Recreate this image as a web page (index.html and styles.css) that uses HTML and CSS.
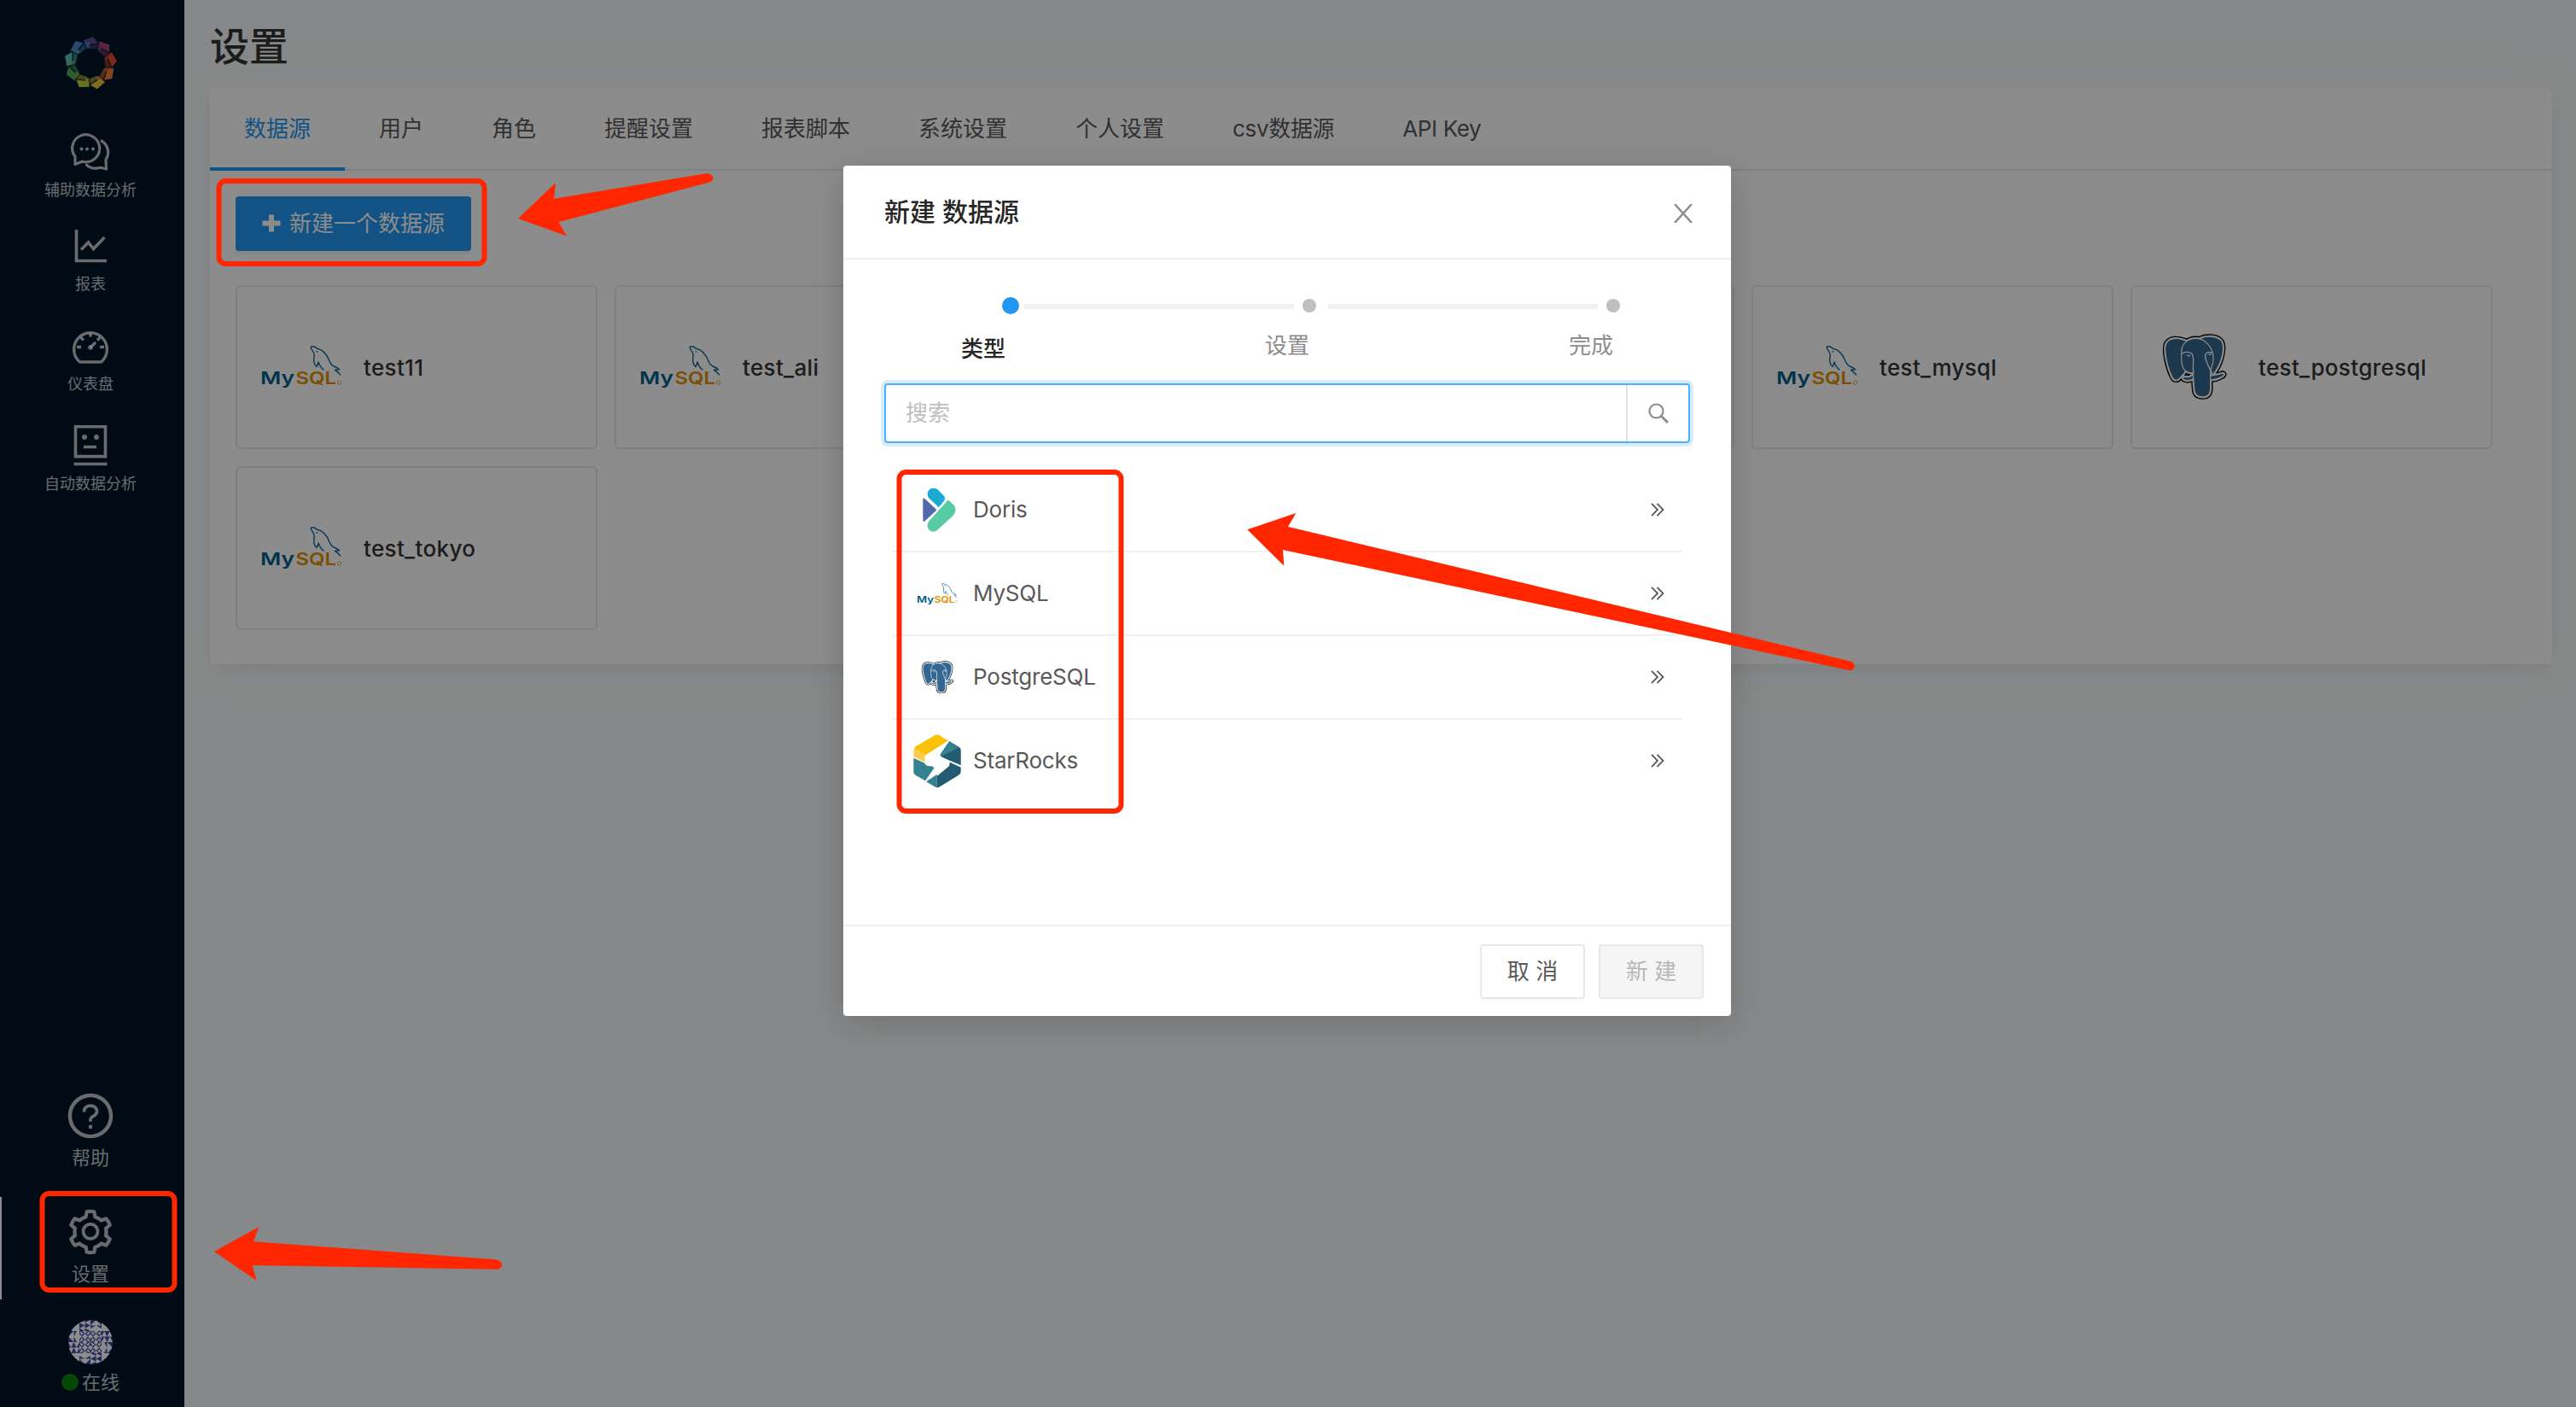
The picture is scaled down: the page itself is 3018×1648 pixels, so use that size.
FILE: index.html
```html
<!DOCTYPE html>
<html lang="zh-CN">
<head>
<meta charset="utf-8">
<title>设置</title>
<link rel="stylesheet" href="styles.css">
</head>
<body>
<svg class="sprite" aria-hidden="true">
  <symbol id="mysql" viewBox="0 0 96 50">
    <path d="M59 1.500C61 .5 64 .8 66 3c8 1.500 12 7 15 15 1.500 4 3 5 5 6 3 1 5 2 6.500 3.800-2 .2-4 .6-5 .5 3 2 5 4 6.500 6M59 1.500c0 2 3 5 4 8 .5 3-.8 6 0 10 .5 2 1.500 4 3 5 .8-1 1.500-3 2-5.500 1 3 3 7 6.500 9.500" fill="none" stroke="#12678f" stroke-width="1.400" stroke-linejoin="round"/>
    <circle cx="66.500" cy="6.800" r=".9" fill="#12678f"/>
    <text x="0" y="45" font-size="20.500" font-weight="600" fill="#00618a" textLength="40" lengthAdjust="spacingAndGlyphs">My</text>
    <text x="41.500" y="45" font-size="20.500" font-weight="600" fill="#e48e00" textLength="47.500" lengthAdjust="spacingAndGlyphs">SQL</text>
    <circle cx="92.500" cy="43" r="2.200" fill="none" stroke="#e48e00" stroke-width=".8"/>
  </symbol>
  <symbol id="pg-shape" viewBox="0 0 330 300" overflow="visible">
    <path d="M122 60C100 52 72 50 60 70c-12 24 6 90 20 117 6 13 18 14 26 4l16-18 50-90z"/>
    <path d="M176 54c24-10 62-10 76 12 12 28-6 82-30 112l-20-4z"/>
    <path d="M118 184c8 6 22 4 34-4l2 12c-8 8-28 10-36 2z"/>
    <path d="M212 182c10 2 28-4 44-8 6 2 4 10-8 14-10 6-26 10-38 8z"/>
    <path d="M112 106c-2-32 20-52 50-52 34 0 60 34 60 68 0 24-10 30-10 56v48c0 20-8 30-26 30-20 0-30-10-30-30l-4-52c-34-2-42-20-40-68z"/>
  </symbol>
  <symbol id="postgres" viewBox="43 38 225 230">
    <use href="#pg-shape" width="330" height="300" fill="#000" stroke="#000" stroke-width="17" stroke-linejoin="round"/>
    <use href="#pg-shape" width="330" height="300" fill="#fff" stroke="#fff" stroke-width="9" stroke-linejoin="round"/>
    <use href="#pg-shape" width="330" height="300" fill="#336791" stroke="#fff" stroke-width="3.500" stroke-linejoin="round"/>
    <path d="M114 106c10-8 30-6 36 4 8 22-2 40 4 64M218 104c-10-4-22-2-24 8 0 22 12 40 24 62M132 112l8 2M208 110l6-1" fill="none" stroke="#fff" stroke-width="4" stroke-linecap="round"/>
  </symbol>
  <symbol id="right" viewBox="0 0 16 16">
    <path d="M1 .8 8 8l-7 7.200M7.500.8l7 7.200-7 7.200" fill="none" stroke="currentColor" stroke-width="1.800"/>
  </symbol>
  <symbol id="tile" viewBox="0 0 13 13">
    <path fill="#fff" d="M6.500 3 10 6.500 6.500 10 3 6.500zM0 0l5 2.500L2.500 5zM13 0l-2.500 5L8 2.500zM0 13l2.500-5L5 10.500zM13 13 8 10.500 10.500 8zM3.500 0h6l-3 3zM3.500 13h6l-3-3zM0 3.500v6l3-3zM13 3.500v6l-3-3z"/>
  </symbol>
  <symbol id="tri" viewBox="0 0 13 6.500"><path fill="#fff" d="M0 0v6.500L6.500 3.200zM6.500 0v6.500L13 3.200z"/></symbol>
</svg>

<div class="app">
  <nav class="sidebar">
    <svg class="logo" viewBox="-32 -32 64 64">
      <defs><g id="petal"><path d="M3-31-8.500-26.500-4.500-21 9-23.800z"/><path d="m-4.200-20 13-2.700-1.500 6-9 .2z" opacity=".6"/><path d="M9.800-23.200 15.500-20l-4.800 5.800-2.800-1.800z" opacity=".8"/></g></defs>
      <use href="#petal" fill="#5e4c88"/>
      <use href="#petal" fill="#a0406f" transform="rotate(40)"/>
      <use href="#petal" fill="#e2492f" transform="rotate(80)"/>
      <use href="#petal" fill="#ee7f36" transform="rotate(120)"/>
      <use href="#petal" fill="#e8c83c" transform="rotate(160)"/>
      <use href="#petal" fill="#bcd03c" transform="rotate(200)"/>
      <use href="#petal" fill="#4fa956" transform="rotate(240)"/>
      <use href="#petal" fill="#5fbfb0" transform="rotate(280)"/>
      <use href="#petal" fill="#4a86c4" transform="rotate(320)"/>
    </svg>
    <div class="nav-item first">
      <svg class="nav-icon" viewBox="0 0 48 48" fill="none" stroke="currentColor" stroke-width="3.200"><path d="M6 38.500V29.500A16 16 0 1 1 16 35.500L14 35.200z" stroke-linejoin="round"/><path d="M36 10.500A15.500 15.500 0 0 1 42 33l.5 11-6.500-1.700c-7 2-13 .5-17.500-4" stroke-linejoin="round"/><g fill="currentColor" stroke="none"><circle cx="13.500" cy="20.500" r="2"/><circle cx="20" cy="20.500" r="2"/><circle cx="27" cy="20.500" r="2"/></g></svg>
      <span>辅助数据分析</span>
    </div>
    <div class="nav-item">
      <svg class="nav-icon" viewBox="0 0 48 48" fill="none" stroke="currentColor" stroke-width="3.600"><path d="M7.500 5v36.500H43M13 28.500 21.500 20l6 7.500L40.500 14"/></svg>
      <span>报表</span>
    </div>
    <div class="nav-item">
      <svg class="nav-icon" viewBox="0 0 48 48" fill="none" stroke="currentColor" stroke-width="3.400"><path d="M11.500 43a19.400 19.400 0 1 1 25 0z" stroke-linejoin="round"/><path d="M24 8.500v5M8 25.500h5M35 25.500h5M12.500 14l3.500 3.500M35.500 14 32 17.500M24 26l6-6" /><circle cx="24" cy="26" r="2.800" fill="currentColor" stroke="none"/></svg>
      <span>仪表盘</span>
    </div>
    <div class="nav-item">
      <svg class="nav-icon" viewBox="0 0 48 48" fill="none" stroke="currentColor" stroke-width="3.200"><path d="M6.500 1.600h35v35h-35zM4.500 45.500h39M16 25.500h15" stroke-width="3.600"/><circle cx="17" cy="14" r="3" fill="currentColor" stroke="none"/><circle cx="31" cy="14" r="3" fill="currentColor" stroke="none"/></svg>
      <span>自动数据分析</span>
    </div>
    <div class="nav-foot help">
      <svg class="foot-icon" viewBox="0 0 1024 1024" fill="currentColor"><path d="M512 64C264.600 64 64 264.600 64 512s200.600 448 448 448 448-200.600 448-448S759.400 64 512 64zm0 820c-205.400 0-372-166.600-372-372s166.600-372 372-372 372 166.600 372 372-166.600 372-372 372z"/><path d="M623.600 316.700C593.600 290.400 554 276 512 276s-81.600 14.500-111.600 40.700C369.200 344 352 380.700 352 420v7.600c0 4.400 3.600 8 8 8h48c4.400 0 8-3.600 8-8V420c0-44.100 43.100-80 96-80s96 35.900 96 80c0 31.100-22 59.600-56.100 72.700-21.200 8.100-39.200 22.300-52.100 40.900-13.100 19-19.900 41.800-19.900 64.900V620c0 4.400 3.600 8 8 8h48c4.400 0 8-3.600 8-8v-22.700a48.300 48.300 0 0 1 30.900-44.800c59-22.700 97.100-74.700 97.100-132.500.1-39.300-17.100-76-48.300-103.300zM472 732a40 40 0 1 0 80 0 40 40 0 1 0-80 0z"/></svg>
      <span>帮助</span>
    </div>
    <div class="nav-foot active">
      <svg class="foot-icon" viewBox="0 0 1024 1024" fill="currentColor"><path d="M924.800 625.700l-65.500-56c3.100-19 4.700-38.400 4.700-57.800s-1.600-38.800-4.700-57.800l65.500-56a32.030 32.030 0 0 0 9.300-35.200l-.9-2.600a443.740 443.740 0 0 0-79.700-137.900l-1.800-2.100a32.120 32.120 0 0 0-35.100-9.500l-81.300 28.900c-30-24.600-63.500-44-99.700-57.600l-15.700-85a32.050 32.050 0 0 0-25.800-25.700l-2.700-.5c-52.100-9.400-106.900-9.400-159 0l-2.700.5a32.050 32.050 0 0 0-25.800 25.700l-15.800 85.400a351.860 351.860 0 0 0-99 57.400l-81.900-29.100a32 32 0 0 0-35.100 9.500l-1.800 2.100a446.020 446.020 0 0 0-79.700 137.900l-.9 2.600c-4.500 12.500-.8 26.500 9.300 35.200l66.300 56.600c-3.100 18.800-4.600 38-4.600 57.100 0 19.200 1.500 38.400 4.600 57.100L99 625.500a32.030 32.030 0 0 0-9.300 35.200l.9 2.600c18.100 50.400 44.900 96.900 79.700 137.900l1.800 2.100a32.120 32.120 0 0 0 35.100 9.500l81.900-29.100c29.800 24.500 63.100 43.900 99 57.400l15.800 85.400a32.050 32.050 0 0 0 25.800 25.700l2.700.5a449.400 449.400 0 0 0 159 0l2.700-.5a32.050 32.050 0 0 0 25.800-25.700l15.700-85a350 350 0 0 0 99.700-57.600l81.300 28.900a32 32 0 0 0 35.100-9.500l1.800-2.100c34.800-41.100 61.600-87.500 79.700-137.900l.9-2.600c4.500-12.300.8-26.300-9.300-35zM788.300 465.900c2.500 15.100 3.800 30.600 3.800 46.100s-1.300 31-3.800 46.100l-6.600 40.100 74.700 63.900a370.030 370.030 0 0 1-42.600 73.600L721 702.800l-31.400 25.800c-23.900 19.600-50.500 35-79.300 45.800l-38.100 14.300-17.900 97a377.500 377.500 0 0 1-85 0l-17.900-97.200-37.800-14.500c-28.500-10.800-55-26.200-78.700-45.700l-31.400-25.900-93.400 33.200c-17-22.900-31.200-47.600-42.600-73.600l75.500-64.500-6.500-40c-2.400-14.900-3.700-30.300-3.700-45.500 0-15.300 1.200-30.600 3.700-45.500l6.500-40-75.500-64.500c11.300-26.100 25.600-50.700 42.600-73.600l93.400 33.200 31.400-25.900c23.700-19.500 50.200-34.900 78.700-45.700l37.900-14.300 17.900-97.200c28.100-3.200 56.800-3.200 85 0l17.900 97 38.100 14.300c28.700 10.800 55.400 26.200 79.300 45.800l31.400 25.800 92.800-32.900c17 22.900 31.200 47.600 42.600 73.600L781.800 426l6.500 39.900zM512 326c-97.200 0-176 78.800-176 176s78.800 176 176 176 176-78.800 176-176-78.800-176-176-176zm79.200 255.200A111.600 111.600 0 0 1 512 614c-29.900 0-58-11.700-79.200-32.800A111.600 111.600 0 0 1 400 502c0-29.900 11.700-58 32.800-79.200C454 401.600 482.100 390 512 390c29.900 0 58 11.600 79.200 32.800A111.600 111.600 0 0 1 624 502c0 29.900-11.700 58-32.800 79.200z"/></svg>
      <span>设置</span>
    </div>
    <div class="nav-user">
      <svg class="avatar" viewBox="0 0 52 52">
        <rect width="52" height="52" fill="#404ca8"/>
        <use href="#tile" x="13" y="13" width="13" height="13"/><use href="#tile" x="26" y="13" width="13" height="13"/><use href="#tile" x="13" y="26" width="13" height="13"/><use href="#tile" x="26" y="26" width="13" height="13"/>
        <g id="edge"><path fill="#fff" d="M19.500 0v6.500L13 3.250zM26 0v6.500l-6.500-3.250zM19.500 6.500V13L13 9.750zM26 6.500V13l-6.500-3.250zM26 6.500 32.500 0 39 6.500zM26 13v-3l6.500-3.500L39 10v3zM2 13 13 2v11z"/></g>
        <use href="#edge" transform="rotate(90 26 26)"/><use href="#edge" transform="rotate(180 26 26)"/><use href="#edge" transform="rotate(270 26 26)"/>
      </svg>
      <div class="status"><i></i><span>在线</span></div>
    </div>
  </nav>

  <main class="main">
    <h1>设置</h1>
    <section class="panel">
      <div class="tabs">
        <a class="on">数据源</a><a>用户</a><a>角色</a><a>提醒设置</a><a>报表脚本</a><a>系统设置</a><a>个人设置</a><a class="latin">csv数据源</a><a class="latin">API Key</a>
      </div>
      <div class="panel-body">
        <button class="add"><svg viewBox="0 0 22 22"><path d="M8 .5h6v7h7.500v6H14v7H8v-7H.5v-6H8z" fill="#fff"/></svg><span>新建一个数据源</span></button>
        <div class="cards">
          <div class="card"><svg class="mysql"><use href="#mysql"/></svg><b>test11</b></div>
          <div class="card"><svg class="mysql"><use href="#mysql"/></svg><b>test_ali</b></div>
          <div class="card"></div>
          <div class="card"></div>
          <div class="card"><svg class="mysql"><use href="#mysql"/></svg><b>test_mysql</b></div>
          <div class="card"><svg class="pg"><use href="#postgres"/></svg><b>test_postgresql</b></div>
          <div class="card"><svg class="mysql"><use href="#mysql"/></svg><b>test_tokyo</b></div>
        </div>
      </div>
    </section>
  </main>
</div>

<div class="mask">
  <div class="modal" role="dialog">
    <header class="modal-head">
      <h2>新建 数据源</h2>
      <svg class="close" viewBox="0 0 22 22"><path d="M1 0 21 22M21 0 1 22" fill="none" stroke="#8c8c8c" stroke-width="2.400"/></svg>
    </header>
    <div class="modal-body">
      <div class="steps">
        <div class="step current"><div class="track"><i></i><u></u></div><span>类型</span></div>
        <div class="step"><div class="track"><i></i><u></u></div><span>设置</span></div>
        <div class="step"><div class="track"><i></i></div><span>完成</span></div>
      </div>
      <div class="search">
        <span>搜索</span>
        <div class="search-btn"><svg viewBox="0 0 24 24"><circle cx="9.500" cy="9.500" r="8" fill="none" stroke="#8c8c8c" stroke-width="2.200"/><path d="m15.500 15.500 7.500 7.500" stroke="#8c8c8c" stroke-width="3"/></svg></div>
      </div>
      <div class="list">
        <div class="row"><div class="ico"><svg class="doris" viewBox="152 122 118 157"><path fill="#5268ac" d="M153 163q1-6 6-2l40 37q2 3 0 6l-40 37q-5 4-6-3z"/><path fill="#19abd1" d="M169 146c0-21 24-29 38-15l18 18c8 8 7 15 2 21l-18 22-33-31q-7-7-7-15z"/><path fill="#57cba4" d="m242 166 19 16c10 11 10 26 0 38l-54 50c-19 18-39 2-38-15 0-6 3-12 7-16z"/></svg></div><span>Doris</span><svg class="go"><use href="#right"/></svg></div>
        <div class="row"><div class="ico"><svg class="mysql-s"><use href="#mysql"/></svg></div><span>MySQL</span><svg class="go"><use href="#right"/></svg></div>
        <div class="row"><div class="ico"><svg class="pg-s"><use href="#postgres"/></svg></div><span>PostgreSQL</span><svg class="go"><use href="#right"/></svg></div>
        <div class="row"><div class="ico"><svg class="rocks" viewBox="121 989 167 187"><path fill="#fbc108" d="M196 992q8-4 16 0l31 19-81 51-38-23q1-6 7-9z"/><path fill="#fdcd50" d="m124 1039 38 23-1 24-39-19v-19q0-6 2-9z"/><path fill="#35828f" d="m122 1071 38 18q6 11 17 11 12-2 17 6l-31 45-34-19q-7-5-7-13z"/><path fill="#235b70" d="m247 1013 34 20q6 4 6 11v53l-43-18-27-13q-3-4 0-9z"/><path fill="#35828f" d="m247 1013 34 22-64 32q-3-4 0-10z"/><path fill="#235b70" d="m248 1086 39 18v15q0 9-8 13l-67 41q-4 3-8 2v-40l40-33q5-5 4-16z"/><path fill="#35828f" d="m166 1154 38-25v46q-4 0-8-3z"/></svg></div><span>StarRocks</span><svg class="go"><use href="#right"/></svg></div>
      </div>
    </div>
    <footer class="modal-foot">
      <button class="btn">取 消</button>
      <button class="btn disabled">新 建</button>
    </footer>
  </div>
</div>

<svg class="marks" viewBox="0 0 3018 1648">
  <g fill="none" stroke="#ff2600" stroke-width="6">
    <rect x="256.500" y="212" width="311" height="97" rx="8"/>
    <rect x="49.500" y="1398" width="155" height="113" rx="8"/>
    <rect x="1053.500" y="553" width="260" height="397" rx="8"/>
  </g>
  <g fill="#ff2600">
    <path d="M607 256 651 214 649 232.700 827 203.200Q835 203 835.500 209 835 212 832 213.300L654.500 260 664 276.500z"/>
    <path d="M251 1466 303.300 1437 297 1454.300 581 1475.300Q588 1477 588 1481 588 1486 583 1486.700L295.800 1482 300.500 1500z"/>
    <path d="M1461.300 620.300 1518.300 601 1509 617 2168 774.600Q2173 776.500 2172.700 780.500 2172 785.500 2167 785.300L1503 644 1504.300 662.700z"/>
  </g>
</svg>
</body>
</html>
```
FILE: styles.css
```css
* { box-sizing: border-box; }
body {
  margin: 0;
  width: 3018px;
  height: 1648px;
  overflow: hidden;
  position: relative;
  font-family: Inter, "Noto Sans CJK SC", sans-serif;
  font-size: 26px;
  line-height: 40px;
  color: #595959;
  background: #f6f8f9;
}
h1, h2, b { font-weight: 500; margin: 0; }
svg { display: block; flex: none; }
button { font: inherit; margin: 0; padding: 0; }
.sprite { display: none; }

.app { display: flex; height: 1648px; }

/* Sidebar */
.sidebar {
  width: 216px;
  flex: none;
  background: #001529;
  color: rgba(255, 255, 255, .75);
  display: flex;
  flex-direction: column;
}
.sidebar > div { padding-right: 4px; }
.logo { width: 66px; height: 64px; margin: 42px 0 48px 73px; }
.nav-item {
  display: flex;
  flex-direction: column;
  align-items: center;
  gap: 10px;
  margin-bottom: 37px;
  font-size: 18px;
  line-height: 22px;
}
.nav-item.first { margin-bottom: 30px; }
.nav-icon { width: 48px; height: 48px; }
.nav-foot {
  height: 120px;
  padding-top: 11px;
  display: flex;
  flex-direction: column;
  align-items: center;
  gap: 5px;
  font-size: 22px;
  line-height: 28px;
}
.nav-foot.help { margin: auto 0 16px; }
.nav-foot.active { box-shadow: inset 2px 0 #fff; }
.foot-icon { width: 60px; height: 60px; }
.nav-user {
  height: 126px;
  padding-top: 24px;
  display: flex;
  flex-direction: column;
  align-items: center;
  gap: 7px;
  font-size: 22px;
  line-height: 28px;
}
.avatar { width: 52px; height: 52px; border-radius: 50%; }
.status { display: flex; align-items: center; gap: 4px; }
.status i { width: 20px; height: 20px; border-radius: 50%; background: #0c800c; }

/* Page */
.main { flex: 1; padding: 24px 28px 0 30px; }
h1 { font-size: 46px; line-height: 60px; color: #333; }
.panel {
  margin-top: 20px;
  height: 674px;
  background: #fff;
  border-radius: 6px;
  box-shadow: 0 8px 18px -6px rgba(102, 136, 153, .15), 0 0 60px rgba(102, 136, 153, .06);
}
.tabs { display: flex; height: 96px; border-bottom: 2px solid #e8e8e8; }
.tabs a { padding: 27px 40px 0; height: 96px; }
.tabs a.latin { letter-spacing: -.35px; }
.tabs a.on { color: #2196f3; border-bottom: 4px solid #2196f3; }
.panel-body { padding: 30px; }
.add {
  width: 276px;
  height: 64px;
  display: flex;
  align-items: center;
  justify-content: center;
  gap: 10px;
  border: 0;
  border-radius: 4px;
  color: #fff;
  background: #2196f3;
  box-shadow: 0 4px 0 rgba(0, 0, 0, .045);
}
.add svg { width: 22px; height: 22px; }
.cards { margin-top: 40px; display: grid; grid-template-columns: repeat(6, 424px); gap: 20px; }
.card {
  height: 192px;
  border: 2px solid #e8e8e8;
  border-radius: 6px;
  padding-left: 27px;
  display: flex;
  align-items: center;
  color: #333;
}
.card b { padding-top: 2px; letter-spacing: .35px; }
.mysql { width: 96px; height: 50px; margin-right: 25px; }
.pg { width: 77px; height: 78px; margin: 0 37px 0 7px; }

/* Modal */
.mask {
  position: absolute;
  inset: 0;
  display: flex;
  justify-content: center;
  align-items: flex-start;
  padding: 194px 2px 0 0;
  background: rgba(0, 0, 0, .45);
}
.modal {
  width: 1040px;
  height: 996px;
  display: flex;
  flex-direction: column;
  background: #fff;
  border-radius: 4px;
  box-shadow: 0 8px 40px rgba(0, 0, 0, .17);
}
.modal-head {
  height: 110px;
  padding: 0 45px 0 48px;
  display: flex;
  align-items: center;
  justify-content: space-between;
  border-bottom: 2px solid #f0f0f0;
}
.modal-head h2 { font-size: 30px; color: #262626; }
.close { width: 22px; height: 22px; margin-top: 4px; }
.modal-body { flex: 1; padding: 44px 48px 0; }
.steps { height: 101px; display: flex; padding-left: 48px; }
.step { width: 356px; flex: none; color: #8c8c8c; }
.step:last-child { width: 136px; }
.step span { display: block; width: 136px; text-align: center; margin-top: 17px; }
.step.current span { margin-top: 21px; color: #262626; font-weight: 500; }
.track { height: 20px; display: flex; align-items: center; padding-left: 86px; }
.track i { flex: none; width: 16px; height: 16px; border-radius: 50%; background: #bfbfbf; }
.track u { flex: none; width: 316px; height: 6px; margin: 2px 0 0 14px; border-radius: 2px; background: #f0f0f0; }
.current .track { padding-left: 90px; }
.current .track i { width: 20px; height: 20px; background: #2196f3; }
.current .track u { margin-left: 6px; }
.search {
  height: 70px;
  display: flex;
  justify-content: space-between;
  align-items: center;
  padding-left: 23px;
  border: 2px solid #4ab0ff;
  border-radius: 4px;
  box-shadow: 0 0 0 4px rgba(33, 150, 243, .18);
  color: #bfbfbf;
}
.search-btn {
  width: 73px;
  height: 66px;
  border-left: 2px solid #e2e2e2;
  display: flex;
  align-items: center;
  justify-content: center;
}
.search svg { width: 24px; height: 24px; }
.list { margin: 30px 10px 0; }
.row {
  height: 98px;
  display: flex;
  align-items: center;
  padding: 0 20px 0 24px;
  border-bottom: 2px solid #f0f0f0;
}
.row:last-child { border-color: transparent; }
.row span { flex: 1; margin-left: 14px; letter-spacing: -.2px; }
.ico { width: 56px; display: flex; justify-content: center; }
.doris { width: 39px; height: 52px; margin-left: 4px; }
.mysql-s { width: 48px; height: 25px; }
.pg-s { width: 38px; height: 39px; margin-right: 1px; }
.rocks { width: 56px; height: 63px; }
.go { width: 16px; height: 16px; }
.modal-foot {
  height: 107px;
  padding: 21px 32px 0;
  border-top: 2px solid #f0f0f0;
  display: flex;
  justify-content: flex-end;
  gap: 16px;
}
.btn {
  width: 123px;
  height: 64px;
  border: 2px solid #e8e8e8;
  border-radius: 4px;
  background: #fff;
  color: #595959;
  box-shadow: 0 4px 0 rgba(0, 0, 0, .015);
}
.btn.disabled { background: #f5f5f5; color: #b8b8b8; box-shadow: none; }

.marks { position: absolute; left: 0; top: 0; width: 3018px; height: 1648px; pointer-events: none; }
```
